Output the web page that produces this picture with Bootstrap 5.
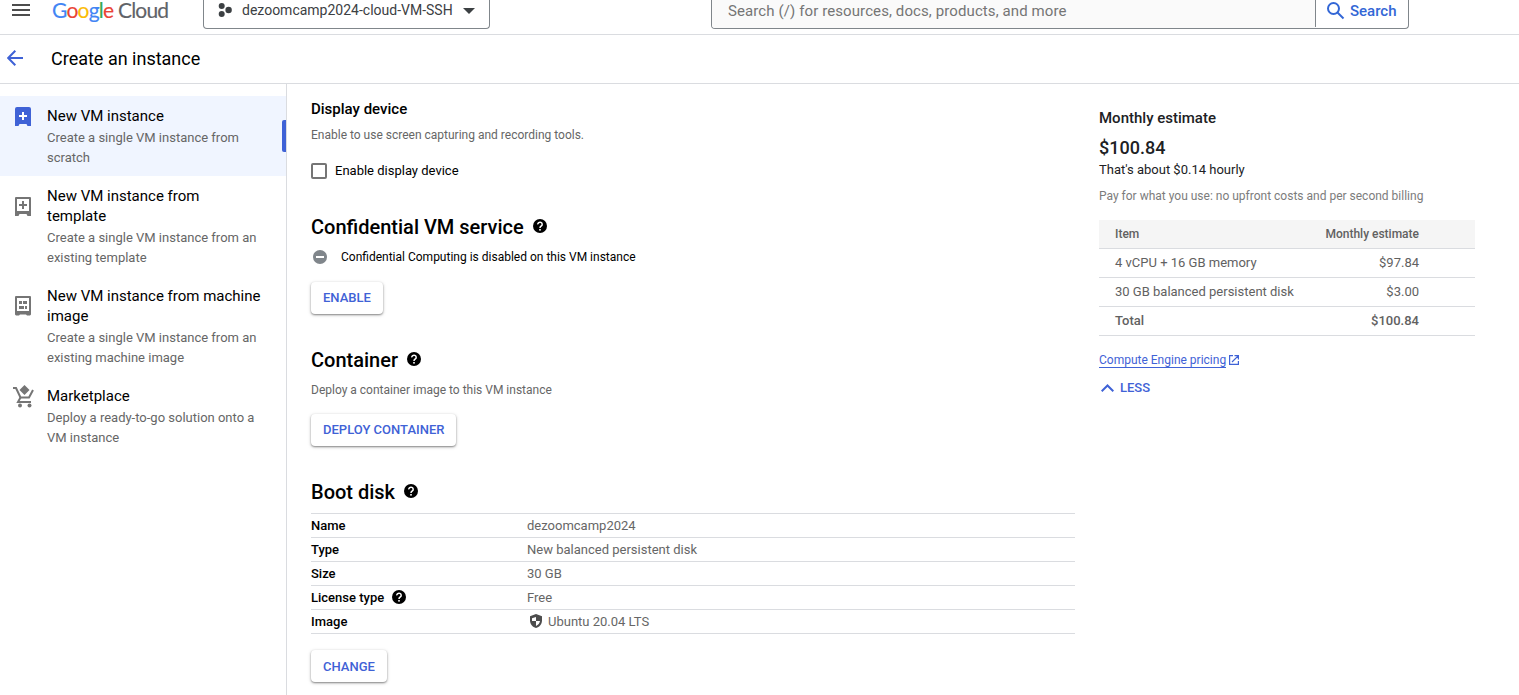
<!DOCTYPE html>
<html lang="en">
<head>
<meta charset="utf-8">
<meta name="viewport" content="width=device-width, initial-scale=1">
<title>Create an instance</title>
<link href="https://cdn.jsdelivr.net/npm/bootstrap@5.3.0/dist/css/bootstrap.min.css" rel="stylesheet">
<style>
body{font-family:Roboto,"Liberation Sans",sans-serif;font-size:13px;line-height:20px;color:#000;background:#fff;height:695px;overflow:hidden}
svg{display:block;flex:none}
.top-bar{height:35px;border-bottom:1px solid #dadce0}
.menu-icon{margin:4px 22px 0 12px}
.logo{font-family:Lato,sans-serif;font-size:21px;line-height:20px;width:151px;color:#5f6368;letter-spacing:-.78px;white-space:nowrap;-webkit-text-stroke:.15px}
.g-blue{color:#4285f4}.g-red{color:#ea4335}.g-yellow{color:#fbbc04}.g-green{color:#34a853}
.project-picker{width:287px;height:29px;border:1px solid #80868b;border-top:0;border-radius:0 0 4px 4px;color:#3c4043;padding-left:14px}
.project-name{margin-left:10px;width:221px;white-space:nowrap;font-size:14px}
.search-box{margin-left:221px;width:698px;height:29px;border:1px solid #80868b;border-top:0;border-radius:0 0 4px 4px;overflow:hidden}
.search-input{width:603px;height:28px;background:#fafafa;color:#757575;font-size:15px;line-height:22px;padding-left:16px;letter-spacing:.1px}
.search-btn{border-left:1px solid #80868b;height:27px;color:#3367d6;font-size:15px;font-weight:500;line-height:22px;padding-left:11px;gap:5px}
.title-bar{height:49px;border-bottom:1px solid #dadce0;padding:0 0 2px 7px}
.title-bar h1{font-size:18px;font-weight:400;line-height:46px;margin:2px 0 0 28px}
.side{width:287px;height:611px;border-right:1px solid #dadce0;padding-top:12px}
.side-item{padding:10px 20px 8px 13px}
.side-item.current{background:#f0f5ff;position:relative}
.side-item.current::after{content:"";position:absolute;right:0;top:24px;width:4px;height:32px;background:#3f62d6;border-radius:2px 0 0 2px}
.side-text{width:214px;margin-left:12px}
.side-title{font-size:15px}
.side-desc{margin-top:2px;color:#666}
.main{width:788px;padding:15px 0 0 24px}
.muted{color:#666}
.sub{font-size:12px}
.h-sub{font-size:15px;font-weight:500;line-height:20px}
.h-sec{font-size:20px;font-weight:500;line-height:28px;margin:0;gap:9px}
.h-sec svg{margin-bottom:2px}
.display-note{margin:6px 0 16px}
.check-row{margin-bottom:32px}
.status-row{margin:6px 0 15px;padding-left:2px;gap:14px}
.container-note{margin:6px 0 14px}
.check{width:16px;height:16px;border:2px solid #757575;border-radius:2px}
.btn.raised{display:block;height:32px;padding:0 12px;border:0;border-radius:4px;background:#fff;color:#3f62d6;font-size:13px;font-weight:500;line-height:32px;box-shadow:0 1px 2px rgba(0,0,0,.42),0 1px 4px rgba(0,0,0,.14)}
.btn.raised.change{line-height:34px}
.section-gap{margin-bottom:32px}
.spec{border-top:1px solid #dadce0;margin:7px 0 16px;width:764px}
.spec-row{height:24px;border-bottom:1px solid #dadce0}
.spec-key{width:216px;font-weight:500;gap:8px}
.spec-key svg,.spec-val svg{margin-bottom:2px}
.spec-val{color:#666;gap:5px}
.cost{width:376px;margin-left:24px;padding-top:24px;color:#202124}
.total-price{font-size:18px;font-weight:500;line-height:24px;margin-top:8px}
.cost-note{color:#7c7c7c;margin:6px 0 14px}
.cost-row{height:29px;border-bottom:1px solid #dadce0;padding:0 56px 0 16px;color:#616161}
.cost-head{background:#f5f5f5;font-size:12px;font-weight:500}
.strong-row{font-weight:500}
.blue{color:#3f62d6}
.link-row{height:18px;margin-top:15px}
.link-row svg{margin:0 0 0 3px}
.price-link{font-size:12px;line-height:16px;height:16px;border-bottom:1px solid #3f62d6;text-decoration:none}
.less-row{margin-top:9px;padding-left:2px;gap:6px;font-weight:500}
</style>
<script src="https://cdn.jsdelivr.net/npm/bootstrap@5.3.0/dist/js/bootstrap.bundle.min.js"></script>
</head>
<body>
<svg width="0" height="0" class="d-none">
  <symbol id="help" viewBox="0 0 14 14"><circle cx="7" cy="7" r="7" fill="#000"/><path d="M4.800 5.400a2.200 2.100 0 1 1 3.600 1.500C7.500 7.600 7 7.800 7 8.900" fill="none" stroke="#fff" stroke-width="1.500"/><rect x="6.200" y="10" width="1.600" height="1.600" fill="#fff"/></symbol>
</svg>
<header class="top-bar d-flex align-items-start">
  <svg class="menu-icon" width="18" height="12" viewBox="0 0 18 12" fill="#4d4d4d"><path d="M0 0h18v2H0zM0 5h18v2H0zM0 10h18v2H0z"/></svg>
  <div class="logo"><span class="g-blue">G</span><span class="g-red">o</span><span class="g-yellow">o</span><span class="g-blue">g</span><span class="g-green">l</span><span class="g-red">e</span> Cloud</div>
  <div class="project-picker d-flex align-items-start">
    <svg width="14" height="18" viewBox="0 -3 14 18" fill="#3c4043"><circle cx="3.700" cy="3" r="3"/><circle cx="3.700" cy="11" r="3"/><circle cx="10.600" cy="7" r="3.200"/></svg>
    <span class="project-name">dezoomcamp2024-cloud-VM-SSH</span>
    <svg class="mt-2" width="12" height="6" viewBox="0 0 12 6" fill="#3c4043"><path d="M0 0h12L6 6z"/></svg>
  </div>
  <div class="search-box d-flex">
    <div class="search-input">Search (/) for resources, docs, products, and more</div>
    <div class="search-btn d-flex flex-grow-1"><svg width="18" height="20" viewBox="0 0 18 20" fill="none" stroke="#3367d6" stroke-width="2"><circle cx="6.500" cy="8.500" r="5.500"/><path d="M10.500 12.500l6 6"/></svg><span>Search</span></div>
  </div>
</header>
<div class="title-bar d-flex align-items-center">
  <svg width="16" height="16" viewBox="0 0 16 16" fill="none" stroke="#3f62d6" stroke-width="2"><path d="M16 8H1.500M8.300 .8L1.200 8l7.100 7.200"/></svg>
  <h1>Create an instance</h1>
</div>
<div class="d-flex">
  <nav class="side">
    <div class="side-item current d-flex align-items-start">
      <svg width="22" height="22" viewBox="0 0 22 22"><path d="M4 1h12q2 0 2 2v17h-3.500l-1-2h-7l-1 2H2V3q0-2 2-2z" fill="#3f62d6"/><path d="M10 6v8M6 10h8" stroke="#fff" stroke-width="2"/></svg>
      <div class="side-text"><div class="side-title">New VM instance</div><div class="side-desc">Create a single VM instance from scratch</div></div>
    </div>
    <div class="side-item d-flex align-items-start">
      <svg width="22" height="32" viewBox="0 -10 22 32"><path d="M3 2h14v14H3z" fill="none" stroke="#757575" stroke-width="2" stroke-linejoin="round"/><path d="M2 15h16v5h-3.500l-1-2h-7l-1 2H2z" fill="#757575"/><path d="M10 5v8M6 9h8" stroke="#757575" stroke-width="2"/></svg>
      <div class="side-text"><div class="side-title">New VM instance from template</div><div class="side-desc">Create a single VM instance from an existing template</div></div>
    </div>
    <div class="side-item d-flex align-items-start">
      <svg width="22" height="32" viewBox="0 -10 22 32"><path d="M3 1h14v15H3z" fill="none" stroke="#757575" stroke-width="2" stroke-linejoin="round"/><path d="M2 15h16v3.500l-1 1h-3l-1-1H7l-1 1H3l-1-1z" fill="#757575"/><path d="M6 5h3v3H6zM10 5h4v3h-4zM6 10h5v3H6zM12 10h2v3h-2z" fill="#757575"/></svg>
      <div class="side-text"><div class="side-title">New VM instance from machine image</div><div class="side-desc">Create a single VM instance from an existing machine image</div></div>
    </div>
    <div class="side-item d-flex align-items-start">
      <svg width="22" height="22" viewBox="0 1 22 22" overflow="visible"><g fill="none" stroke="#757575" stroke-width="2"><path d="M0 3h3l4.500 9.500h8.500l4-7.500"/><path d="M7.500 12.500L5 17h13"/></g><path d="M11.500 0l5 5-5 5-5-5z" fill="#757575"/><circle cx="7" cy="20.500" r="2" fill="#757575"/><circle cx="16.500" cy="20.500" r="2" fill="#757575"/></svg>
      <div class="side-text"><div class="side-title">Marketplace</div><div class="side-desc">Deploy a ready-to-go solution onto a VM instance</div></div>
    </div>
  </nav>
  <main class="main">
    <div class="h-sub">Display device</div>
    <div class="muted sub display-note">Enable to use screen capturing and recording tools.</div>
    <div class="d-flex align-items-center gap-2 check-row"><span class="check"></span><span>Enable display device</span></div>
    <h2 class="h-sec d-flex align-items-center">Confidential VM service<svg width="14" height="14"><use href="#help"/></svg></h2>
    <div class="status-row sub d-flex align-items-center"><svg width="14" height="14" viewBox="0 0 14 14"><circle cx="7" cy="7" r="7" fill="#80868b"/><path d="M3 7h8" stroke="#fff" stroke-width="2"/></svg>Confidential Computing is disabled on this VM instance</div>
    <button class="btn raised section-gap">ENABLE</button>
    <h2 class="h-sec d-flex align-items-center">Container<svg width="14" height="14"><use href="#help"/></svg></h2>
    <div class="muted sub container-note">Deploy a container image to this VM instance</div>
    <button class="btn raised section-gap">DEPLOY CONTAINER</button>
    <h2 class="h-sec d-flex align-items-center">Boot disk<svg width="14" height="14"><use href="#help"/></svg></h2>
    <div class="spec">
      <div class="spec-row d-flex align-items-center"><div class="spec-key">Name</div><div class="spec-val">dezoomcamp2024</div></div>
      <div class="spec-row d-flex align-items-center"><div class="spec-key">Type</div><div class="spec-val">New balanced persistent disk</div></div>
      <div class="spec-row d-flex align-items-center"><div class="spec-key">Size</div><div class="spec-val">30 GB</div></div>
      <div class="spec-row d-flex align-items-center"><div class="spec-key d-flex align-items-center">License type<svg width="14" height="14"><use href="#help"/></svg></div><div class="spec-val">Free</div></div>
      <div class="spec-row d-flex align-items-center"><div class="spec-key">Image</div><div class="spec-val d-flex align-items-center"><svg width="16" height="14" viewBox="-3 0 16 14"><path d="M6 0l6 2.300v4.200c0 3.600-2.500 6.500-6 7.500C2.500 13 0 10.100 0 6.500V2.300z" fill="#4d4d4d"/><path d="M6 3v4H2V4.200zM6 7h4c-.3 2.300-1.800 4-4 5z" fill="#fff"/></svg>Ubuntu 20.04 LTS</div></div>
    </div>
    <button class="btn raised change">CHANGE</button>
  </main>
  <aside class="cost">
    <div class="h-sub">Monthly estimate</div>
    <div class="total-price">$100.84</div>
    <div>That's about $0.14 hourly</div>
    <div class="sub cost-note">Pay for what you use: no upfront costs and per second billing</div>
    <div class="cost-row cost-head d-flex align-items-center justify-content-between"><span>Item</span><span>Monthly estimate</span></div>
    <div class="cost-row d-flex align-items-center justify-content-between"><span>4 vCPU + 16 GB memory</span><span>$97.84</span></div>
    <div class="cost-row d-flex align-items-center justify-content-between"><span>30 GB balanced persistent disk</span><span>$3.00</span></div>
    <div class="cost-row strong-row d-flex align-items-center justify-content-between"><span>Total</span><span>$100.84</span></div>
    <div class="link-row d-flex align-items-center"><a class="price-link blue" href="#">Compute Engine pricing</a><svg width="10" height="10" viewBox="0 0 10 10" fill="none" stroke="#3f62d6" stroke-width="1.200"><path d="M4 .6H.6v8.800h8.800V6M5.500 .6h3.900v3.900M9.200 .8L3 7"/></svg></div>
    <div class="less-row blue d-flex align-items-center"><svg width="13" height="8" viewBox="0 0 13 8" fill="none" stroke="#3f62d6" stroke-width="2"><path d="M.7 7.300l5.800-5.800 5.800 5.800"/></svg><span>LESS</span></div>
  </aside>
</div>
</body>
</html>
